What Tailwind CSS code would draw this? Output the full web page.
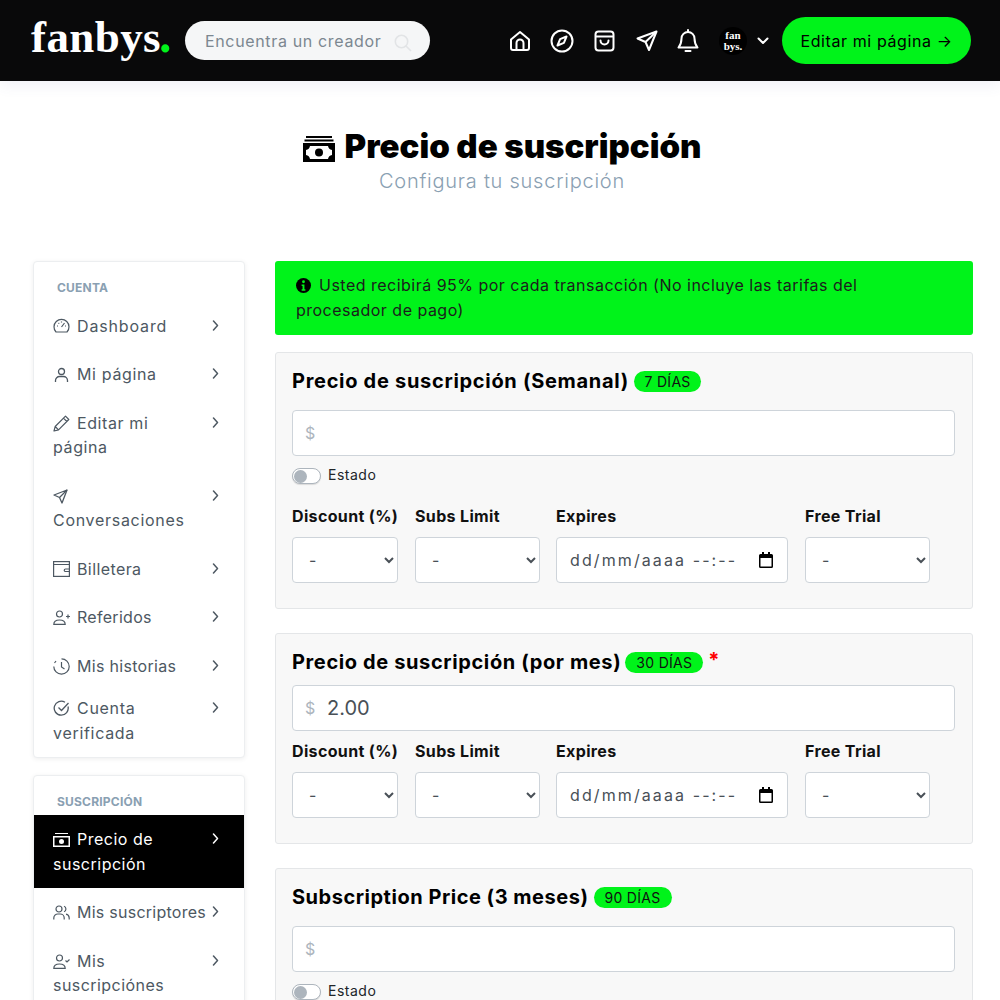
<!DOCTYPE html>
<html lang="es">
<head>
    <meta charset="UTF-8">
    <meta name="viewport" content="width=device-width, initial-scale=1.0">
    <title>Precio de suscripción</title>
    <script src="https://cdn.jsdelivr.net/npm/@tailwindcss/browser@4"></script>
</head>
<body class="bg-white h-[1000px] overflow-hidden [font-family:Inter,sans-serif] text-[#212529]">
    <!-- Header -->
    <header class="h-[81px] bg-[#09090a] flex items-center pl-[31px] pr-[29px] shadow-[0_4px_14px_rgba(80,90,160,0.09)] relative">
        <div class="w-[154px] flex items-baseline [font-family:'Liberation_Serif',serif] font-bold text-[45px] leading-none text-white tracking-[0.4px] pb-[11px] whitespace-nowrap">fanbys<span class="text-[#00f31a] text-[50px] leading-none -ml-[2px]">.</span></div>
        <div class="w-[245px] h-[39px] bg-[#f5f6f7] rounded-full flex items-center pl-[20px] pr-[18px] justify-between">
            <span class="text-[16px] text-[#7c8790] tracking-[0.65px] whitespace-nowrap">Encuentra un creador</span>
            <svg class="w-[18px] h-[18px] mt-[5px] text-[#e2e4e6]" viewBox="0 0 18 18" fill="none" stroke="currentColor" stroke-width="1.6"><circle cx="7.5" cy="7.5" r="6.2"/><path d="M12 12l5 5"/></svg>
        </div>
        <nav class="ml-auto flex items-center">
            <svg class="w-[22px] h-[22px] text-white" viewBox="0 0 22 22" fill="none" stroke="currentColor" stroke-width="2" stroke-linejoin="round"><path d="M2 9.5 11 2l9 7.5V18a2 2 0 0 1-2 2H4a2 2 0 0 1-2-2z"/><path d="M7.5 20v-7a3.5 3.5 0 0 1 7 0v7"/></svg>
            <svg class="w-[24px] h-[24px] ml-[19px] text-white" viewBox="0 0 24 24" fill="none" stroke="currentColor" stroke-width="2" stroke-linejoin="round"><circle cx="12" cy="12" r="10.5"/><path d="m16.5 7.5-2.6 6.4-6.4 2.6 2.6-6.4z"/></svg>
            <svg class="w-[21px] h-[22px] ml-[20px] text-white" viewBox="0 0 21 22" fill="none" stroke="currentColor" stroke-width="2" stroke-linejoin="round"><rect x="1.5" y="1.5" width="18" height="19" rx="3"/><path d="M1.500 6.500h18"/><path d="M6.500 10.500a4 4 0 0 0 8 0" stroke-linecap="round"/></svg>
            <svg class="w-[22px] h-[22px] ml-[21px] text-white" viewBox="0 0 22 22" fill="none" stroke="currentColor" stroke-width="2" stroke-linejoin="round"><path d="M20.500 1.500 1.500 8.500l8 3.500 3.500 8z"/><path d="m9.500 12 11-10.500"/></svg>
            <svg class="w-[22px] h-[24px] ml-[19px] text-white" viewBox="0 0 22 24" fill="none" stroke="currentColor" stroke-width="2" stroke-linejoin="round"><path d="M11 3a6.500 6.500 0 0 0-6.500 6.500c0 5-1 6.500-3 9h19c-2-2.500-3-4-3-9A6.500 6.500 0 0 0 11 3z"/><path d="M11 1v2M8.500 22h5" stroke-linecap="round"/></svg>
            <div class="w-[28px] h-[28px] ml-[20px] rounded-full bg-black flex flex-col items-center justify-center [font-family:'Liberation_Serif',serif] font-bold text-[11px] leading-[11px] text-white text-center"><span>fan</span><span>bys.</span></div>
            <svg class="w-[12px] h-[8px] ml-[10px] text-white" viewBox="0 0 12 8" fill="none" stroke="currentColor" stroke-width="2" stroke-linecap="round" stroke-linejoin="round"><path d="m1.500 1.500 4.500 4.500 4.500-4.500"/></svg>
            <a class="ml-[13px] w-[189px] h-[47px] rounded-full bg-[#00f31a] text-black text-[16px] tracking-[0.6px] flex items-center justify-center whitespace-nowrap">Editar mi página →</a>
        </nav>
    </header>

    <!-- Title -->
    <div class="pt-[44px] h-[180px] flex flex-col items-center pl-[4px]">
        <div class="flex items-center gap-[10px] h-[42px]">
            <svg class="w-[32px] h-[26px] mt-[5px] text-black" viewBox="0 0 32 26" fill="currentColor"><rect x="3" y="0" width="26" height="2"/><rect x="1.500" y="3.500" width="29" height="2"/><path fill-rule="evenodd" d="M0 7h32v19H0zm3 3v13h26V10z"/><circle cx="16" cy="16.500" r="4"/><path d="M3 14a5 5 0 0 0 4-4H3zM29 14a5 5 0 0 1-4-4h4zM3 19a5 5 0 0 1 4 4H3zM29 19a5 5 0 0 0-4 4h4z"/></svg>
            <h1 class="text-[33px] font-black text-black leading-none whitespace-nowrap">Precio de suscripción</h1>
        </div>
        <p class="text-[20px] font-light text-[#8aa0b2] leading-[28px] tracking-[0.75px] whitespace-nowrap">Configura tu suscripción</p>
    </div>

    <main class="flex items-start pl-[33px] pr-[27px] gap-[30px]">
        <!-- Sidebar -->
        <aside class="w-[212px] shrink-0 flex flex-col gap-[17px]">
            <section class="h-[497px] bg-white rounded-[4px] border border-[#eceef0] shadow-[0_1px_5px_rgba(0,0,0,0.07)] pt-[17px]">
                <h6 class="pl-[23px] text-[12px] leading-[18px] font-bold text-[#8aa0b2] tracking-[0.2px]">CUENTA</h6>
                <ul class="text-[16px] leading-[24.500px] text-[#4d5862] pt-[4.500px]">
                    <li class="flex justify-between items-start pl-[19px] pr-[25px] py-[12px]">
                        <span class="whitespace-nowrap tracking-[0.85px]"><svg class="inline w-[17px] h-[16px] mr-[7px] -mt-[2px]" viewBox="0 0 17 16" fill="none" stroke="currentColor" stroke-width="1.200"><path d="M3 14a7.500 7.500 0 1 1 11 0z"/><path d="m8.500 9 3-4M4 8h1M5.500 5l.7.7M8.500 3.500v1M13 8h-1"/></svg>Dashboard</span>
                        <svg class="w-[7px] h-[11px] mt-[6px]" viewBox="0 0 7 11" fill="none" stroke="currentColor" stroke-width="1.500" stroke-linecap="round" stroke-linejoin="round"><path d="m1.500 1 4 4.500-4 4.500"/></svg>
                    </li>
                    <li class="flex justify-between items-start pl-[19px] pr-[25px] py-[12px]">
                        <span class="whitespace-nowrap tracking-[0.65px]"><svg class="inline w-[17px] h-[16px] mr-[7px] -mt-[2px]" viewBox="0 0 17 16" fill="none" stroke="currentColor" stroke-width="1.300"><circle cx="8.500" cy="4.500" r="3"/><path d="M2.500 15v-1.500a4 4 0 0 1 4-4h4a4 4 0 0 1 4 4V15"/></svg>Mi página</span>
                        <svg class="w-[7px] h-[11px] mt-[6px]" viewBox="0 0 7 11" fill="none" stroke="currentColor" stroke-width="1.500" stroke-linecap="round" stroke-linejoin="round"><path d="m1.500 1 4 4.500-4 4.500"/></svg>
                    </li>
                    <li class="flex justify-between items-start pl-[19px] pr-[25px] py-[12px]">
                        <span class="whitespace-nowrap tracking-[0.6px]"><svg class="inline w-[17px] h-[17px] mr-[7px] -mt-[2px]" viewBox="0 0 17 17" fill="none" stroke="currentColor" stroke-width="1.200" stroke-linejoin="round"><path d="M1 16l1.200-4.500L12.500 1.200l3.300 3.300L5.500 14.800zM2.200 11.500l3.300 3.300M10.500 3.200l3.300 3.300"/></svg>Editar mi<br>página</span>
                        <svg class="w-[7px] h-[11px] mt-[6px]" viewBox="0 0 7 11" fill="none" stroke="currentColor" stroke-width="1.500" stroke-linecap="round" stroke-linejoin="round"><path d="m1.500 1 4 4.500-4 4.500"/></svg>
                    </li>
                    <li class="flex justify-between items-start pl-[19px] pr-[25px] py-[12px]">
                        <span class="whitespace-nowrap tracking-[0.7px]"><svg class="inline w-[15px] h-[15px] -mt-[2px]" viewBox="0 0 15 15" fill="none" stroke="currentColor" stroke-width="1.300" stroke-linejoin="round"><path d="M14 1 1 6l5.500 2.500L9 14z"/><path d="M6.500 8.500 14 1"/></svg><br>Conversaciones</span>
                        <svg class="w-[7px] h-[11px] mt-[6px]" viewBox="0 0 7 11" fill="none" stroke="currentColor" stroke-width="1.500" stroke-linecap="round" stroke-linejoin="round"><path d="m1.500 1 4 4.500-4 4.500"/></svg>
                    </li>
                    <li class="flex justify-between items-start pl-[19px] pr-[25px] py-[12px]">
                        <span class="whitespace-nowrap tracking-[0.4px]"><svg class="inline w-[17px] h-[16px] mr-[7px] -mt-[3px]" viewBox="0 0 17 16" fill="none" stroke="currentColor" stroke-width="1.200"><rect x="0.600" y="0.600" width="15.800" height="14.800"/><path d="M.6 3.500h15.800M16 8h-3.500a1.200 1.200 0 0 0 0 2.500H16"/></svg>Billetera</span>
                        <svg class="w-[7px] h-[11px] mt-[6px]" viewBox="0 0 7 11" fill="none" stroke="currentColor" stroke-width="1.500" stroke-linecap="round" stroke-linejoin="round"><path d="m1.500 1 4 4.500-4 4.500"/></svg>
                    </li>
                    <li class="flex justify-between items-start pl-[19px] pr-[25px] py-[12px]">
                        <span class="whitespace-nowrap tracking-[0.3px]"><svg class="inline w-[17px] h-[15px] mr-[7px] -mt-[2px]" viewBox="0 0 17 15" fill="none" stroke="currentColor" stroke-width="1.200"><circle cx="6.500" cy="4" r="3"/><path d="M.8 14.400c0-3 2-4.400 5.700-4.400s5.700 1.400 5.700 4.400zM13 6.500h4M15 4.500v4"/></svg>Referidos</span>
                        <svg class="w-[7px] h-[11px] mt-[6px]" viewBox="0 0 7 11" fill="none" stroke="currentColor" stroke-width="1.500" stroke-linecap="round" stroke-linejoin="round"><path d="m1.500 1 4 4.500-4 4.500"/></svg>
                    </li>
                    <li class="flex justify-between items-start pl-[19px] pr-[25px] pt-[12px] pb-[12px]">
                        <span class="whitespace-nowrap tracking-[0.3px]"><svg class="inline w-[17px] h-[17px] mr-[7px] -mt-[2px]" viewBox="0 0 17 17" fill="none" stroke="currentColor" stroke-width="1.200"><path d="M8.500.8a7.700 7.700 0 1 1-7.700 7.700" /><path d="M3 3l-1.500 2M8.500 4v5l3 2"/></svg>Mis historias</span>
                        <svg class="w-[7px] h-[11px] mt-[6px]" viewBox="0 0 7 11" fill="none" stroke="currentColor" stroke-width="1.500" stroke-linecap="round" stroke-linejoin="round"><path d="m1.500 1 4 4.500-4 4.500"/></svg>
                    </li>
                    <li class="flex justify-between items-start pl-[19px] pr-[25px] py-[6px]">
                        <span class="whitespace-nowrap tracking-[0.7px]"><svg class="inline w-[17px] h-[17px] mr-[7px] -mt-[2px]" viewBox="0 0 17 17" fill="none" stroke="currentColor" stroke-width="1.300"><path d="M15 6.500a7 7 0 1 1-3-4.200"/><path d="m5.500 7.500 3 3 7-7.500"/></svg>Cuenta<br>verificada</span>
                        <svg class="w-[7px] h-[11px] mt-[6px]" viewBox="0 0 7 11" fill="none" stroke="currentColor" stroke-width="1.500" stroke-linecap="round" stroke-linejoin="round"><path d="m1.500 1 4 4.500-4 4.500"/></svg>
                    </li>
                </ul>
            </section>
            <section class="bg-white rounded-[4px] border border-[#eceef0] shadow-[0_1px_5px_rgba(0,0,0,0.07)] pt-[17px]">
                <h6 class="pl-[23px] text-[12px] leading-[18px] font-bold text-[#8aa0b2] tracking-[0.2px] mb-[4px]">SUSCRIPCIÓN</h6>
                <ul class="text-[16px] leading-[24.500px] text-[#4d5862]">
                    <li class="flex justify-between items-start pl-[19px] pr-[25px] py-[12px] bg-black text-white">
                        <span class="whitespace-nowrap tracking-[0.5px]"><svg class="inline w-[17px] h-[14px] mr-[7px] -mt-[2px]" viewBox="0 0 17 14" fill="currentColor"><rect x="2" y="0" width="13" height="1"/><path fill-rule="evenodd" d="M0 3h17v11H0zm1.500 1.500v8h14v-8z"/><circle cx="8.500" cy="8.500" r="2.500"/></svg>Precio de<br>suscripción</span>
                        <svg class="w-[7px] h-[11px] mt-[6px]" viewBox="0 0 7 11" fill="none" stroke="currentColor" stroke-width="1.500" stroke-linecap="round" stroke-linejoin="round"><path d="m1.500 1 4 4.500-4 4.500"/></svg>
                    </li>
                    <li class="flex justify-between items-start pl-[19px] pr-[25px] py-[12px]">
                        <span class="whitespace-nowrap tracking-[0.25px]"><svg class="inline w-[17px] h-[15px] mr-[7px] -mt-[2px]" viewBox="0 0 17 15" fill="none" stroke="currentColor" stroke-width="1.200"><circle cx="6" cy="4" r="3"/><path d="M.8 14.400V13a4 4 0 0 1 4-4h2.400a4 4 0 0 1 4 4v1.400M11 1.200a3 3 0 0 1 0 5.600M13 9.200a4 4 0 0 1 3.200 3.800v1.400"/></svg>Mis suscriptores</span>
                        <svg class="w-[7px] h-[11px] mt-[6px]" viewBox="0 0 7 11" fill="none" stroke="currentColor" stroke-width="1.500" stroke-linecap="round" stroke-linejoin="round"><path d="m1.500 1 4 4.500-4 4.500"/></svg>
                    </li>
                    <li class="flex justify-between items-start pl-[19px] pr-[25px] py-[12px]">
                        <span class="whitespace-nowrap tracking-[0.45px]"><svg class="inline w-[17px] h-[15px] mr-[7px] -mt-[2px]" viewBox="0 0 17 15" fill="none" stroke="currentColor" stroke-width="1.200"><circle cx="6.500" cy="4" r="3"/><path d="M.8 14.400c0-3 2-4.400 5.700-4.400s5.700 1.400 5.700 4.400zM12.500 6.500l1.500 1.500 2.500-2.500"/></svg>Mis<br>suscripciónes</span>
                        <svg class="w-[7px] h-[11px] mt-[6px]" viewBox="0 0 7 11" fill="none" stroke="currentColor" stroke-width="1.500" stroke-linecap="round" stroke-linejoin="round"><path d="m1.500 1 4 4.500-4 4.500"/></svg>
                    </li>
                </ul>
            </section>
        </aside>

        <!-- Content -->
        <div class="w-[698px]">
            <div class="bg-[#00f31a] rounded-[3px] h-[74px] pl-[21px] pr-[16px] pt-[12px] text-[16px] leading-[24.500px] text-[#1c1c1c] mb-[17px] tracking-[0.49px]">
                <svg class="inline w-[15px] h-[15px] mr-[3px] -mt-[3px]" viewBox="0 0 16 16"><circle cx="8" cy="8" r="8" fill="#000"/><circle cx="8" cy="4" r="1.500" fill="#00f31a"/><path d="M6 7h3v5h1v1.500H6V12h1V8.500H6z" fill="#00f31a"/></svg>
                Usted recibirá 95% por cada transacción (No incluye las tarifas del<br>procesador de pago)
            </div>

            <section class="bg-[#f8f8f8] border border-[#e4e6e8] rounded-[3px] h-[257px] pl-[16px] pr-[17px] pt-[16px] mb-[24px]">
                <div class="flex items-center h-[24px] mb-[17px]">
                    <h5 class="text-[20px] font-bold text-black tracking-[0.7px] whitespace-nowrap">Precio de suscripción (Semanal)</h5>
                    <span class="ml-[5px] w-[67px] h-[21px] rounded-full bg-[#00f31a] text-[14px] text-[#111] tracking-[0.3px] flex items-center justify-center">7 DÍAS</span>
                </div>
                <div class="h-[46px] bg-white border border-[#ced4da] rounded-[4px] flex items-center pl-[12px] text-[16px]">
                    <span class="text-[#adb5bd] w-[22px]">$</span>
                    <input class="flex-1 bg-transparent outline-none text-[20px] text-[#495057]" type="text">
                </div>
                <div class="flex items-center mt-[12px] h-[16px]">
                    <span class="w-[29px] h-[16px] rounded-full border border-[#adb5bd] bg-white flex items-center pl-[1px] shadow-[0_1px_1px_rgba(0,0,0,0.12)]"><span class="w-[13px] h-[13px] rounded-full bg-[#adb5bd]"></span></span>
                    <span class="ml-[7px] text-[14px] text-[#212529] tracking-[0.5px] -mt-[4px]">Estado</span>
                </div>
                <div class="flex gap-[17px] mt-[20px]">
                    <div class="w-[106px]">
                        <label class="block h-[24px] mb-[9px] text-[16px] leading-[24px] font-bold text-[#111] tracking-[0.35px] whitespace-nowrap">Discount (%)</label>
                        <select class="w-full h-[46px] bg-white border border-[#ced4da] rounded-[4px] pl-[12px] text-[16px] text-[#495057]"><option>-</option></select>
                    </div>
                    <div class="w-[125px]">
                        <label class="block h-[24px] mb-[9px] text-[16px] leading-[24px] font-bold text-[#111] tracking-[0.35px] whitespace-nowrap">Subs Limit</label>
                        <select class="w-full h-[46px] bg-white border border-[#ced4da] rounded-[4px] pl-[12px] text-[16px] text-[#495057]"><option>-</option></select>
                    </div>
                    <div class="w-[232px] -ml-px">
                        <label class="block h-[24px] mb-[9px] text-[16px] leading-[24px] font-bold text-[#111] tracking-[0.35px] whitespace-nowrap">Expires</label>
                        <div class="h-[46px] bg-white border border-[#ced4da] rounded-[4px] pl-[13px] pr-[14px] text-[16px] text-[#495057] tracking-[2.1px] flex items-center justify-between whitespace-nowrap">dd/mm/aaaa --:--
                            <svg class="w-[14px] h-[16px] text-black" viewBox="0 0 14 16"><path fill="currentColor" fill-rule="evenodd" d="M3 0h2v2h4V0h2v2h1.500A1.500 1.500 0 0 1 14 3.500v11a1.500 1.500 0 0 1-1.500 1.500h-11A1.500 1.500 0 0 1 0 14.500v-11A1.500 1.500 0 0 1 1.500 2H3zM1.500 6v8.500h11V6z"/></svg>
                        </div>
                    </div>
                    <div class="w-[125px]">
                        <label class="block h-[24px] mb-[9px] text-[16px] leading-[24px] font-bold text-[#111] tracking-[0.35px] whitespace-nowrap">Free Trial</label>
                        <select class="w-full h-[46px] bg-white border border-[#ced4da] rounded-[4px] pl-[12px] text-[16px] text-[#495057]"><option>-</option></select>
                    </div>
                </div>
            </section>

            <section class="bg-[#f8f8f8] border border-[#e4e6e8] rounded-[3px] h-[211px] pl-[16px] pr-[17px] pt-[16px] mb-[24px]">
                <div class="flex items-center h-[24px] mb-[11px]">
                    <h5 class="text-[20px] font-bold text-black tracking-[0.62px] whitespace-nowrap">Precio de suscripción (por mes)</h5>
                    <span class="ml-[4px] w-[78px] h-[21px] rounded-full bg-[#00f31a] text-[14px] text-[#111] tracking-[0.3px] flex items-center justify-center">30 DÍAS</span>
                    <span class="ml-[5px] text-[20px] font-bold text-[#f00] -mt-[4px]">*</span>
                </div>
                <div class="h-[46px] bg-white border border-[#ced4da] rounded-[4px] flex items-center pl-[12px] text-[16px]">
                    <span class="text-[#adb5bd] w-[22px]">$</span>
                    <input class="flex-1 bg-transparent outline-none text-[20px] text-[#495057]" type="text" value="2.00">
                </div>
                <div class="flex gap-[17px] mt-[8px]">
                    <div class="w-[106px]">
                        <label class="block h-[24px] mb-[9px] text-[16px] leading-[24px] font-bold text-[#111] tracking-[0.35px] whitespace-nowrap">Discount (%)</label>
                        <select class="w-full h-[46px] bg-white border border-[#ced4da] rounded-[4px] pl-[12px] text-[16px] text-[#495057]"><option>-</option></select>
                    </div>
                    <div class="w-[125px]">
                        <label class="block h-[24px] mb-[9px] text-[16px] leading-[24px] font-bold text-[#111] tracking-[0.35px] whitespace-nowrap">Subs Limit</label>
                        <select class="w-full h-[46px] bg-white border border-[#ced4da] rounded-[4px] pl-[12px] text-[16px] text-[#495057]"><option>-</option></select>
                    </div>
                    <div class="w-[232px] -ml-px">
                        <label class="block h-[24px] mb-[9px] text-[16px] leading-[24px] font-bold text-[#111] tracking-[0.35px] whitespace-nowrap">Expires</label>
                        <div class="h-[46px] bg-white border border-[#ced4da] rounded-[4px] pl-[13px] pr-[14px] text-[16px] text-[#495057] tracking-[2.1px] flex items-center justify-between whitespace-nowrap">dd/mm/aaaa --:--
                            <svg class="w-[14px] h-[16px] text-black" viewBox="0 0 14 16"><path fill="currentColor" fill-rule="evenodd" d="M3 0h2v2h4V0h2v2h1.500A1.500 1.500 0 0 1 14 3.500v11a1.500 1.500 0 0 1-1.500 1.500h-11A1.500 1.500 0 0 1 0 14.500v-11A1.500 1.500 0 0 1 1.500 2H3zM1.500 6v8.500h11V6z"/></svg>
                        </div>
                    </div>
                    <div class="w-[125px]">
                        <label class="block h-[24px] mb-[9px] text-[16px] leading-[24px] font-bold text-[#111] tracking-[0.35px] whitespace-nowrap">Free Trial</label>
                        <select class="w-full h-[46px] bg-white border border-[#ced4da] rounded-[4px] pl-[12px] text-[16px] text-[#495057]"><option>-</option></select>
                    </div>
                </div>
            </section>

            <section class="bg-[#f8f8f8] border border-[#e4e6e8] rounded-[3px] h-[257px] pl-[16px] pr-[17px] pt-[16px]">
                <div class="flex items-center h-[24px] mb-[17px]">
                    <h5 class="text-[20px] font-bold text-black tracking-[0.52px] whitespace-nowrap">Subscription Price (3 meses)</h5>
                    <span class="ml-[5px] w-[78px] h-[21px] rounded-full bg-[#00f31a] text-[14px] text-[#111] tracking-[0.3px] flex items-center justify-center">90 DÍAS</span>
                </div>
                <div class="h-[46px] bg-white border border-[#ced4da] rounded-[4px] flex items-center pl-[12px] text-[16px]">
                    <span class="text-[#adb5bd] w-[22px]">$</span>
                    <input class="flex-1 bg-transparent outline-none text-[20px] text-[#495057]" type="text">
                </div>
                <div class="flex items-center mt-[12px] h-[16px]">
                    <span class="w-[29px] h-[16px] rounded-full border border-[#adb5bd] bg-white flex items-center pl-[1px] shadow-[0_1px_1px_rgba(0,0,0,0.12)]"><span class="w-[13px] h-[13px] rounded-full bg-[#adb5bd]"></span></span>
                    <span class="ml-[7px] text-[14px] text-[#212529] tracking-[0.5px] -mt-[4px]">Estado</span>
                </div>
            </section>
        </div>
    </main>
</body>
</html>
